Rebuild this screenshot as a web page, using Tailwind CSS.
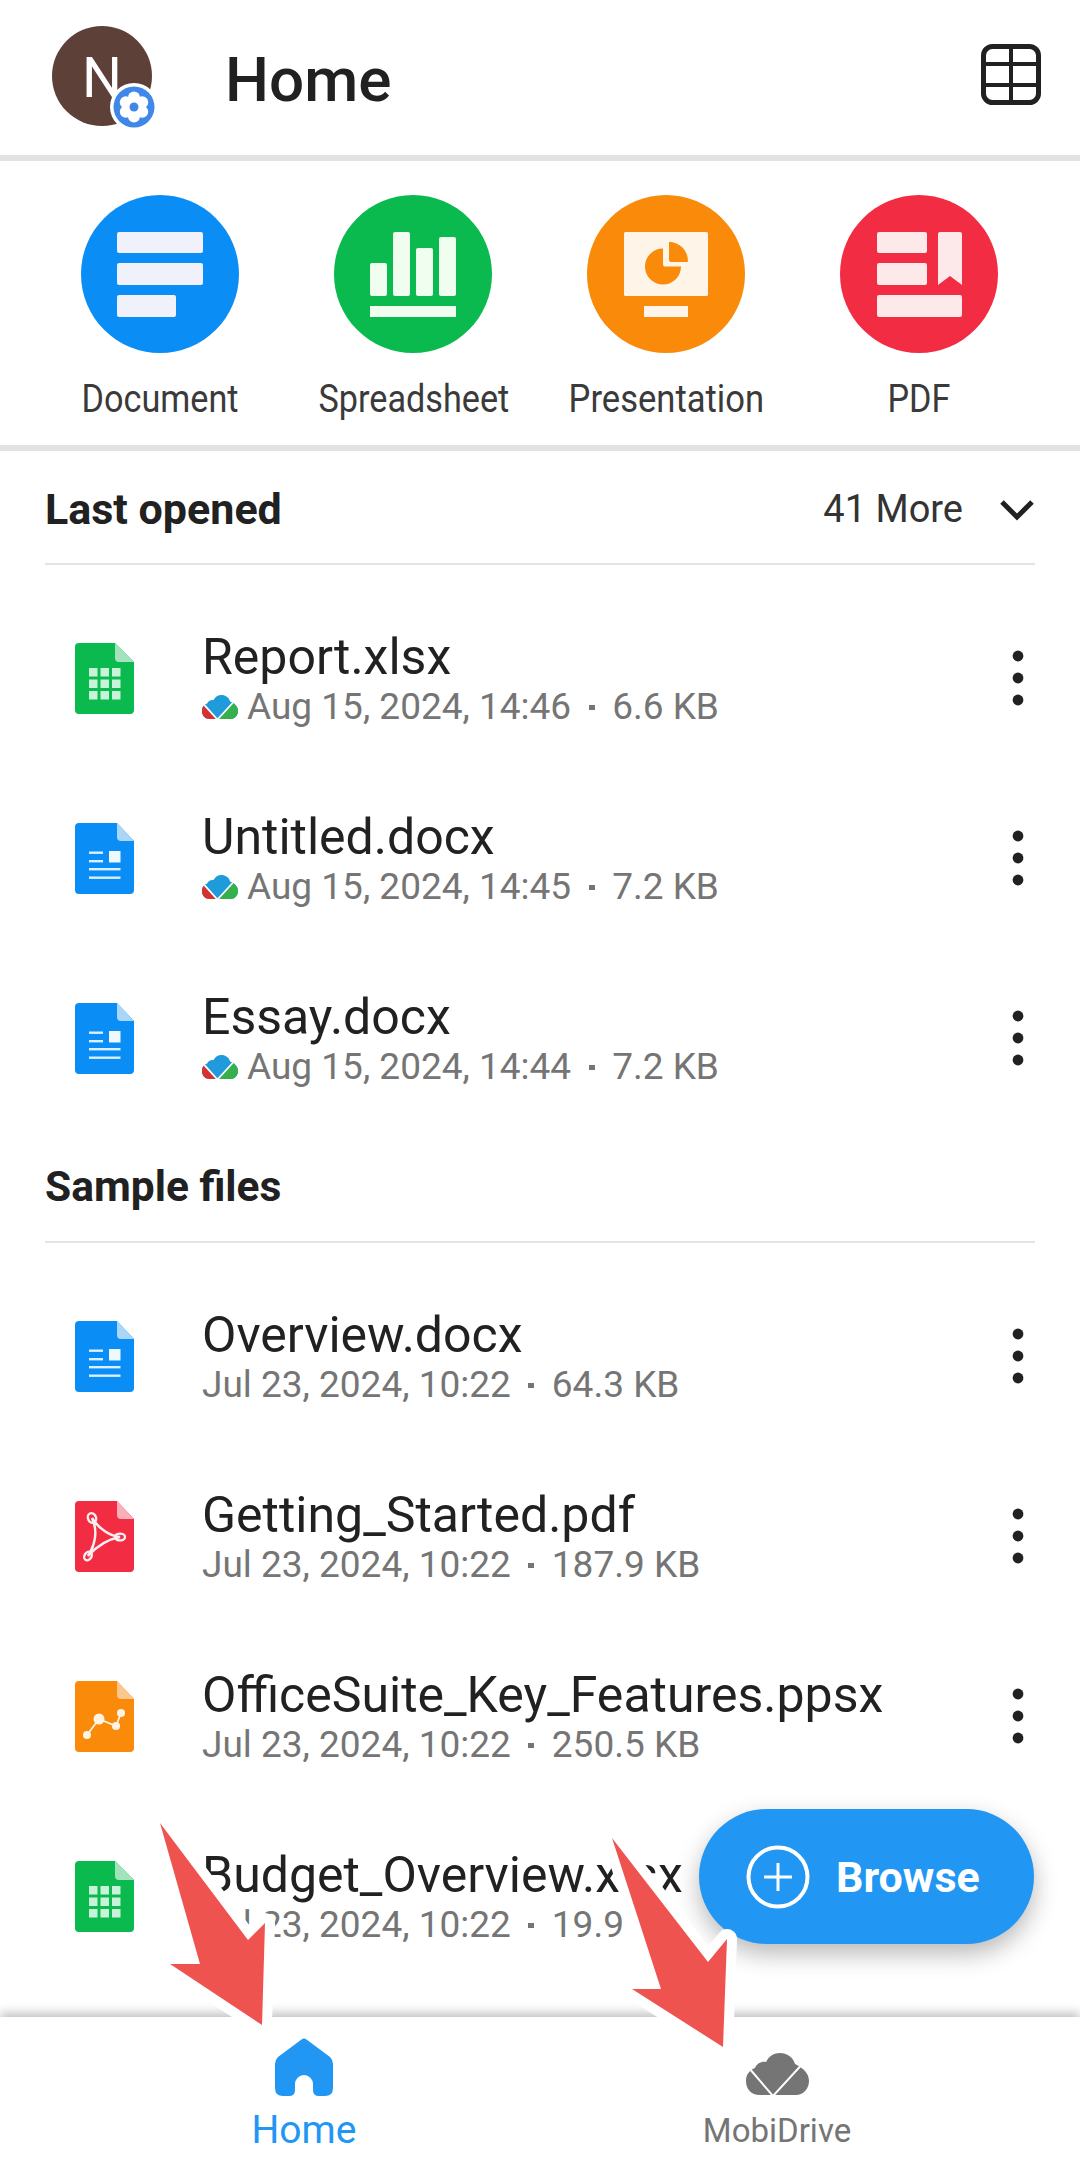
<!doctype html>
<html lang="en">
<head>
<meta charset="UTF-8">
<title>Home</title>
<script src="https://cdn.jsdelivr.net/npm/@tailwindcss/browser@4"></script>
</head>
<body class="bg-white font-['Roboto',sans-serif] text-[#212121]">
<svg class="absolute w-0 h-0" width="0" height="0">
	<defs>
		<clipPath id="cloud-clip"><path d="M14 42C5 42 0 36 0 28C0 21 4 17 9 15C11 10 16 8 20 9C23 3 28 0 34 0C41 0 47 4 49 11C57 15 63 20 63 28C63 36 57 42 50 42Z"/></clipPath>
		<symbol id="mini-cloud" viewBox="0 0 63 42">
			<g clip-path="url(#cloud-clip)">
				<rect width="63" height="42" fill="#1f9bdc"/>
				<path d="M0 15L27 44H0Z" fill="#d5322f"/>
				<path d="M27 44L60 8H63V44Z" fill="#35b04d"/>
				<path d="M2 15L27 43L60 7" fill="none" stroke="#fff" stroke-width="3"/>
			</g>
		</symbol>
		<symbol id="file-xlsx" viewBox="0 0 59 71">
			<path d="M4 0H40L59 19V67a4 4 0 0 1-4 4H4a4 4 0 0 1-4-4V4a4 4 0 0 1 4-4Z" fill="#0bba4f"/>
			<path d="M40 0L59 19H44a4 4 0 0 1-4-4Z" fill="#a3e3bc"/>
			<g fill="#c9f3d8">
				<rect x="14" y="25" width="8.5" height="8.5"/><rect x="25.5" y="25" width="8.5" height="8.5"/><rect x="37" y="25" width="8.5" height="8.5"/>
				<rect x="14" y="36.5" width="8.5" height="8.5"/><rect x="25.5" y="36.5" width="8.5" height="8.5"/><rect x="37" y="36.5" width="8.5" height="8.5"/>
				<rect x="14" y="48" width="8.5" height="8.5"/><rect x="25.5" y="48" width="8.5" height="8.5"/><rect x="37" y="48" width="8.5" height="8.5"/>
			</g>
		</symbol>
		<symbol id="file-docx" viewBox="0 0 59 71">
			<path d="M4 0H42L59 18V67a4 4 0 0 1-4 4H4a4 4 0 0 1-4-4V4a4 4 0 0 1 4-4Z" fill="#0a8df5"/>
			<path d="M42 0L59 18H46a4 4 0 0 1-4-4Z" fill="#a9d6f9"/>
			<g fill="#d8f0ff">
				<rect x="14" y="28.5" width="14" height="2.4"/><rect x="14" y="37" width="14" height="2.4"/>
				<rect x="34" y="28" width="11.5" height="11.5" fill="#eef8ff"/>
				<rect x="14" y="45" width="31.5" height="2.4"/><rect x="14" y="53.5" width="31.5" height="2.4"/>
			</g>
		</symbol>
		<symbol id="file-pdf" viewBox="0 0 59 71">
			<path d="M4 0H42L59 18V67a4 4 0 0 1-4 4H4a4 4 0 0 1-4-4V4a4 4 0 0 1 4-4Z" fill="#f22c43"/>
			<path d="M42 0L59 18H46a4 4 0 0 1-4-4Z" fill="#fab0b8"/>
			<path d="M17 17C23 30 20 44 13 55C22 45 34 38 45 36C35 35 24 28 17 17Z" fill="none" stroke="#fdeef0" stroke-width="2.6"/>
			<ellipse cx="17" cy="17" rx="4" ry="5" fill="none" stroke="#fdeef0" stroke-width="2.4" transform="rotate(-25 17 17)"/>
			<ellipse cx="45" cy="36" rx="5" ry="3.4" fill="none" stroke="#fdeef0" stroke-width="2.4"/>
			<ellipse cx="13" cy="55" rx="3.4" ry="4.6" fill="none" stroke="#fdeef0" stroke-width="2.4" transform="rotate(35 13 55)"/>
		</symbol>
		<symbol id="file-ppsx" viewBox="0 0 59 71">
			<path d="M4 0H42L59 18V67a4 4 0 0 1-4 4H4a4 4 0 0 1-4-4V4a4 4 0 0 1 4-4Z" fill="#f98a0a"/>
			<path d="M42 0L59 18H46a4 4 0 0 1-4-4Z" fill="#fcc78e"/>
			<path d="M12 54L24 38L41 45L46 32" fill="none" stroke="#fff3e3" stroke-width="1.8"/>
			<g fill="#fff3e3"><circle cx="12" cy="54" r="4"/><circle cx="24" cy="38" r="5.5"/><circle cx="41" cy="45" r="4"/><circle cx="46" cy="32" r="4"/></g>
		</symbol>
		<symbol id="kebab" viewBox="0 0 12 56">
			<circle cx="6" cy="6" r="5.4"/><circle cx="6" cy="28" r="5.4"/><circle cx="6" cy="50" r="5.4"/>
		</symbol>
	</defs>
</svg>

<div class="relative flex flex-col w-[1080px] h-[2171px] overflow-hidden">
	<!-- top bar -->
	<header class="flex items-center h-[155px] shrink-0 pl-[52px] pr-[39px]">
		<div class="relative w-[100px] h-[100px] rounded-full bg-[#5d4037] flex items-center justify-center text-white text-[56px] mt-[-3px] pt-[3px]">
			<span class="block">N</span>
			<svg class="absolute left-[58px] top-[57px]" width="48" height="48" viewBox="0 0 48 48">
				<circle cx="24" cy="24" r="24" fill="#fff"/>
				<circle cx="24" cy="24" r="20.5" fill="#3f87e8"/>
				<g fill="#fff">
					<circle cx="24" cy="14.5" r="6"/><circle cx="32.2" cy="19.2" r="6"/><circle cx="32.2" cy="28.8" r="6"/>
					<circle cx="24" cy="33.5" r="6"/><circle cx="15.8" cy="28.8" r="6"/><circle cx="15.8" cy="19.2" r="6"/>
					<circle cx="24" cy="24" r="8"/>
				</g>
				<circle cx="24" cy="24" r="4.5" fill="#3f87e8"/>
			</svg>
		</div>
		<h1 class="ml-[73px] text-[62px] font-medium leading-none mt-[4px]">Home</h1>
		<svg class="ml-auto mt-[-7px]" width="60" height="61" viewBox="0 0 60 61" fill="none" stroke="#212121" stroke-width="4">
			<rect x="2.5" y="2.5" width="55" height="56" rx="9" stroke-width="5"/>
			<path d="M2 20H58M2 41H58M30 2V59"/>
		</svg>
	</header>
	<div class="h-[6px] shrink-0 bg-[#e2e2e2]"></div>

	<!-- create new -->
	<section class="grid grid-cols-[253px_253px_253px_253px] pl-[33px] h-[284px] shrink-0 pt-[34px]">
		<div class="flex flex-col items-center">
			<svg width="158" height="158" viewBox="0 0 158 158"><circle cx="79" cy="79" r="79" fill="#0a8df5"/><g fill="#f1f1fb"><rect x="36" y="37" width="86" height="21" rx="2"/><rect x="36" y="68" width="86" height="22" rx="2"/><rect x="36" y="100" width="59" height="22" rx="2"/></g></svg>
			<span class="mt-[24px] pl-[2px] text-[38px] leading-[44px] text-[#3a3a3a] scale-x-[.9]">Document</span>
		</div>
		<div class="flex flex-col items-center">
			<svg width="158" height="158" viewBox="0 0 158 158"><circle cx="79" cy="79" r="79" fill="#0bba4f"/><g fill="#effeef"><rect x="36" y="68" width="17" height="33" rx="2"/><rect x="59" y="37" width="17" height="64" rx="2"/><rect x="82" y="53" width="17" height="48" rx="2"/><rect x="105" y="42" width="17" height="59" rx="2"/><rect x="36" y="111" width="86" height="11"/></g></svg>
			<span class="mt-[24px] pl-[2px] text-[38px] leading-[44px] text-[#3a3a3a] scale-x-[.9]">Spreadsheet</span>
		</div>
		<div class="flex flex-col items-center">
			<svg width="158" height="158" viewBox="0 0 158 158"><circle cx="79" cy="79" r="79" fill="#f98a0a"/><rect x="37" y="37" width="84" height="64" rx="1.5" fill="#fff4e8"/><rect x="57" y="111" width="44" height="11" fill="#fff4e8"/><path d="M76 53.5A18 18 0 1 0 94 71.5H78a2 2 0 0 1-2-2Z" fill="#f98a0a"/><path d="M82 47A19 19 0 0 1 101 66a1 1 0 0 1-1 1H84a2 2 0 0 1-2-2Z" fill="#f98a0a"/></svg>
			<span class="mt-[24px] pl-[2px] text-[38px] leading-[44px] text-[#3a3a3a] scale-x-[.91]">Presentation</span>
		</div>
		<div class="flex flex-col items-center">
			<svg width="158" height="158" viewBox="0 0 158 158"><circle cx="79" cy="79" r="79" fill="#f22c43"/><g fill="#fde8ea"><rect x="37" y="37" width="50" height="21" rx="2"/><rect x="37" y="68" width="50" height="22" rx="2"/><rect x="37" y="100" width="85" height="22" rx="2"/><path d="M98 39a2 2 0 0 1 2-2H120a2 2 0 0 1 2 2V90L110 81L98 90Z"/></g></svg>
			<span class="mt-[24px] text-[38px] leading-[44px] text-[#3a3a3a] scale-x-[.9]">PDF</span>
		</div>
	</section>
	<div class="h-[6px] shrink-0 bg-[#e2e2e2]"></div>

	<!-- files -->
	<main class="flex-1 min-h-0 overflow-hidden">
		<div class="mx-[45px] h-[114px] flex items-center justify-between border-b-2 border-[#e4e4e4] pt-[5px]">
			<h2 class="text-[43px] font-bold">Last opened</h2>
			<div class="flex items-center">
				<span class="text-[38px] text-[#333]">41 More</span>
				<svg class="ml-[37px] mr-[1px]" width="34" height="22" viewBox="0 0 34 22" fill="none" stroke="#212121" stroke-width="5"><path d="M2 3L17 18L32 3"/></svg>
			</div>
		</div>
		<ul class="pt-[23px]">
			<li class="flex items-center h-[180px] pl-[75px] pr-[56px]">
				<svg class="shrink-0" width="59" height="71"><use href="#file-xlsx"/></svg>
				<div class="ml-[68px] flex-1 pt-[2px]">
					<p class="text-[50px] leading-[56px]">Report.xlsx</p>
					<p class="flex items-center text-[37px] leading-[44px] text-[#757575]"><svg class="mr-[9px]" width="36" height="24"><use href="#mini-cloud"/></svg>Aug 15, 2024, 14:46<i class="w-[6px] h-[5px] mx-[17.5px] bg-[#757575]"></i>6.6 KB</p>
				</div>
				<svg width="12" height="56" fill="#212121"><use href="#kebab"/></svg>
			</li>
			<li class="flex items-center h-[180px] pl-[75px] pr-[56px]">
				<svg class="shrink-0" width="59" height="71"><use href="#file-docx"/></svg>
				<div class="ml-[68px] flex-1 pt-[2px]">
					<p class="text-[50px] leading-[56px]">Untitled.docx</p>
					<p class="flex items-center text-[37px] leading-[44px] text-[#757575]"><svg class="mr-[9px]" width="36" height="24"><use href="#mini-cloud"/></svg>Aug 15, 2024, 14:45<i class="w-[6px] h-[5px] mx-[17.5px] bg-[#757575]"></i>7.2 KB</p>
				</div>
				<svg width="12" height="56" fill="#212121"><use href="#kebab"/></svg>
			</li>
			<li class="flex items-center h-[180px] pl-[75px] pr-[56px]">
				<svg class="shrink-0" width="59" height="71"><use href="#file-docx"/></svg>
				<div class="ml-[68px] flex-1 pt-[2px]">
					<p class="text-[50px] leading-[56px]">Essay.docx</p>
					<p class="flex items-center text-[37px] leading-[44px] text-[#757575]"><svg class="mr-[9px]" width="36" height="24"><use href="#mini-cloud"/></svg>Aug 15, 2024, 14:44<i class="w-[6px] h-[5px] mx-[17.5px] bg-[#757575]"></i>7.2 KB</p>
				</div>
				<svg width="12" height="56" fill="#212121"><use href="#kebab"/></svg>
			</li>
		</ul>
		<div class="mx-[45px] h-[115px] flex items-center border-b-2 border-[#e4e4e4] pt-[5px]">
			<h2 class="text-[42.5px] font-bold">Sample files</h2>
		</div>
		<ul class="pt-[23px]">
			<li class="flex items-center h-[180px] pl-[75px] pr-[56px]">
				<svg class="shrink-0" width="59" height="71"><use href="#file-docx"/></svg>
				<div class="ml-[68px] flex-1 pt-[2px]">
					<p class="text-[50px] leading-[56px]">Overview.docx</p>
					<p class="flex items-center text-[37px] leading-[44px] text-[#757575]">Jul 23, 2024, 10:22<i class="w-[6px] h-[5px] mx-[17.5px] bg-[#757575]"></i>64.3 KB</p>
				</div>
				<svg width="12" height="56" fill="#212121"><use href="#kebab"/></svg>
			</li>
			<li class="flex items-center h-[180px] pl-[75px] pr-[56px]">
				<svg class="shrink-0" width="59" height="71"><use href="#file-pdf"/></svg>
				<div class="ml-[68px] flex-1 pt-[2px]">
					<p class="text-[50px] leading-[56px]">Getting_Started.pdf</p>
					<p class="flex items-center text-[37px] leading-[44px] text-[#757575]">Jul 23, 2024, 10:22<i class="w-[6px] h-[5px] mx-[17.5px] bg-[#757575]"></i>187.9 KB</p>
				</div>
				<svg width="12" height="56" fill="#212121"><use href="#kebab"/></svg>
			</li>
			<li class="flex items-center h-[180px] pl-[75px] pr-[56px]">
				<svg class="shrink-0" width="59" height="71"><use href="#file-ppsx"/></svg>
				<div class="ml-[68px] flex-1 pt-[2px]">
					<p class="text-[50px] leading-[56px]">OfficeSuite_Key_Features.ppsx</p>
					<p class="flex items-center text-[37px] leading-[44px] text-[#757575]">Jul 23, 2024, 10:22<i class="w-[6px] h-[5px] mx-[17.5px] bg-[#757575]"></i>250.5 KB</p>
				</div>
				<svg width="12" height="56" fill="#212121"><use href="#kebab"/></svg>
			</li>
			<li class="flex items-center h-[180px] pl-[75px] pr-[56px]">
				<svg class="shrink-0" width="59" height="71"><use href="#file-xlsx"/></svg>
				<div class="ml-[68px] flex-1 pt-[2px]">
					<p class="text-[50px] leading-[56px]">Budget_Overview.xlsx</p>
					<p class="flex items-center text-[37px] leading-[44px] text-[#757575]">Jul 23, 2024, 10:22<i class="w-[6px] h-[5px] mx-[17.5px] bg-[#757575]"></i>19.9 KB</p>
				</div>
			</li>
		</ul>
	</main>

	<!-- bottom nav -->
	<nav class="relative grid grid-cols-[608px_338px] h-[154px] shrink-0 bg-white shadow-[0_-4px_10px_rgba(0,0,0,0.25)]">
		<a href="#" class="flex flex-col items-center pt-[21px] text-[#2196f3]">
			<svg width="58" height="58" viewBox="0 0 58 58" fill="#2196f3"><path d="M26.5 1.5Q29-.5 31.5 1.5L55 19Q58 22 58 26V50Q58 58 50 58H44Q38 58 38 52V46A9 9 0 0 0 20 46V52Q20 58 14 58H8Q0 58 0 50V26Q0 22 3 19Z"/></svg>
			<span class="text-[39px] leading-[44px] mt-[12px]">Home</span>
		</a>
		<a href="#" class="flex flex-col items-center pt-[36px] text-[#757575]">
			<svg width="63" height="42" viewBox="0 0 63 42"><path d="M14 42C5 42 0 36 0 28C0 21 4 17 9 15C11 10 16 8 20 9C23 3 28 0 34 0C41 0 47 4 49 11C57 15 63 20 63 28C63 36 57 42 50 42Z" fill="#757575"/><path d="M3 15L27 43L60 7" fill="none" stroke="#fff" stroke-width="2"/></svg>
			<span class="text-[33px] leading-[40px] mt-[16px]">MobiDrive</span>
		</a>
	</nav>

	<!-- floating button -->
	<button class="absolute left-[699px] top-[1809px] w-[335px] h-[135px] rounded-[68px] bg-[#2196f3] shadow-[0_10px_24px_rgba(0,0,0,0.28)] flex items-center pl-[46px] text-white">
		<svg width="66" height="66" viewBox="0 0 66 66" fill="none" stroke="#fff"><circle cx="33" cy="33" r="29.5" stroke-width="4"/><path d="M33 19V47M19 33H47" stroke-width="3"/></svg>
		<span class="ml-[25px] pt-[2px] text-[43px] font-bold">Browse</span>
	</button>

	<!-- annotation arrows -->
	<svg class="absolute left-0 top-0 pointer-events-none" width="1080" height="2171" viewBox="0 0 1080 2171">
		<g fill="none" stroke="#fff" stroke-width="20" stroke-linejoin="round">
			<path d="M160 1823L248 1940L265 1923L262 2025L170 1964H200Z"/>
			<path d="M612 1838L708 1962L727 1939L723 2047L632 1989H661Z"/>
		</g>
		<g fill="#ef5350">
			<path d="M160 1823L248 1940L265 1923L262 2025L170 1964H200Z"/>
			<path d="M612 1838L708 1962L727 1939L723 2047L632 1989H661Z"/>
		</g>
	</svg>
</div>
</body>
</html>
